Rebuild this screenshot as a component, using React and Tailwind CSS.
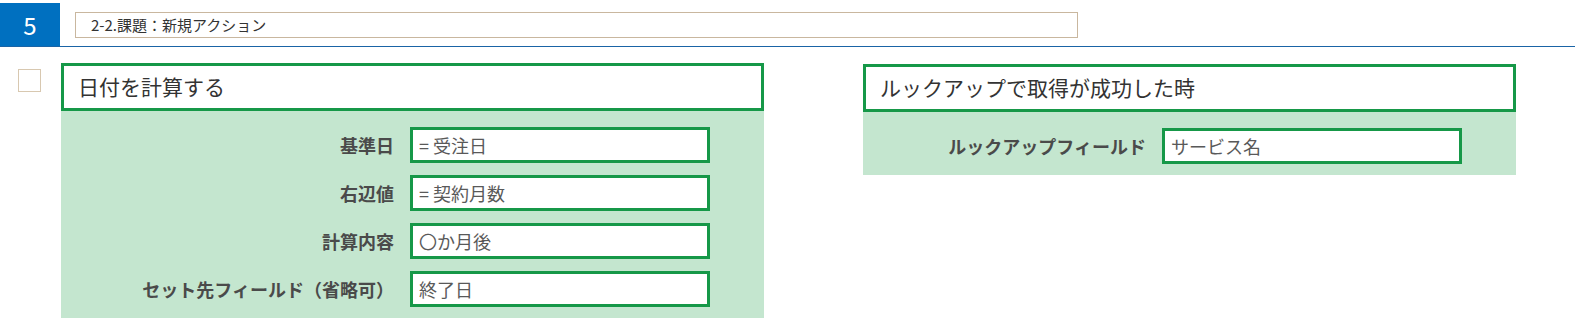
import React from "react";

const font = { fontFamily: '"Noto Sans CJK JP", "Noto Sans", sans-serif' };

function Field({ label, value }) {
  return (
    <div className="flex items-center justify-end gap-4">
      <span className="text-[18px] font-bold text-[#4a4a4a] whitespace-nowrap">{label}</span>
      <div className="w-[300px] h-[36px] bg-white border-[3px] border-[#169848] flex items-center px-[6px] text-[18px] text-[#595959]">
        {value}
      </div>
    </div>
  );
}

function Card({ title, width, fields }) {
  return (
    <div className={`flex flex-col ${width}`}>
      <div className="h-[48px] bg-white border-[3px] border-[#169848] flex items-center px-[14px] text-[21px] text-[#333]">
        {title}
      </div>
      <div className="bg-[#c4e6cf] pt-[16px] pb-[11px] pr-[54px] flex flex-col gap-[12px]">
        {fields.map((f) => (
          <Field key={f.label} label={f.label} value={f.value} />
        ))}
      </div>
    </div>
  );
}

export default function App() {
  return (
    <div className="w-[1575px] h-[329px] bg-white overflow-hidden" style={font}>
      {/* Step header */}
      <div className="flex items-end pt-[3px] border-b-[1.5px] border-[#1a64a6]">
        <div className="w-[60px] h-[43px] bg-[#0070c0] text-white text-[24px] flex items-center justify-center">
          5
        </div>
        <div className="ml-[15px] mb-[8px] w-[1003px] h-[26px] border border-[#c9b79f] flex items-center px-[15px] text-[15px] text-[#333]">
          2-2.課題：新規アクション
        </div>
      </div>

      {/* Actions */}
      <div className="flex items-start pt-[16px]">
        <div className="ml-[18px] mt-[6px] w-[23px] h-[23px] border border-[#d8c8b0] bg-white" />
        <div className="ml-[20px]">
          <Card
            title="日付を計算する"
            width="w-[703px]"
            fields={[
              { label: "基準日", value: "= 受注日" },
              { label: "右辺値", value: "= 契約月数" },
              { label: "計算内容", value: "〇か月後" },
              { label: "セット先フィールド（省略可）", value: "終了日" },
            ]}
          />
        </div>
        <div className="ml-[99px] mt-[1px]">
          <Card
            title="ルックアップで取得が成功した時"
            width="w-[653px]"
            fields={[{ label: "ルックアップフィールド", value: "サービス名" }]}
          />
        </div>
      </div>
    </div>
  );
}
